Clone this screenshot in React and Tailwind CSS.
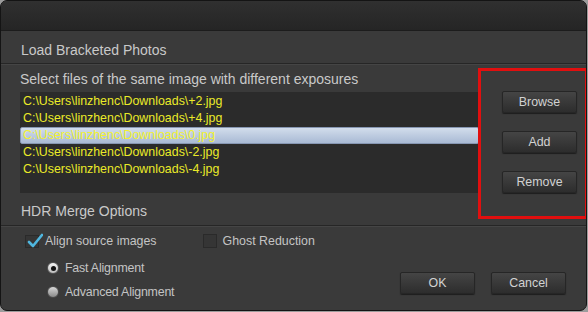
import React, { useState } from 'react';

const files = [
    'C:\\Users\\linzhenc\\Downloads\\+2.jpg',
    'C:\\Users\\linzhenc\\Downloads\\+4.jpg',
    'C:\\Users\\linzhenc\\Downloads\\0.jpg',
    'C:\\Users\\linzhenc\\Downloads\\-2.jpg',
    'C:\\Users\\linzhenc\\Downloads\\-4.jpg',
];

const DarkButton = ({ children }) => (
    <button className="flex h-[22px] w-[75px] items-center justify-center rounded-[2px] border border-[#262626] bg-gradient-to-b from-[#454545] to-[#2d2d2d] text-[12.4px] text-[#d2d2d2] shadow-[0_1px_1px_rgba(0,0,0,0.5)]">
        {children}
    </button>
);

const SectionHeader = ({ children, className }) => (
    <div className={`flex items-center border-b border-[#262626] px-[20px] text-[14px] text-[#c9c9c9] shadow-[0_1px_0_#454545] ${className}`}>
        {children}
    </div>
);

export default function App() {
    const [selected, setSelected] = useState(2);

    return (
        <div className="h-[312px] w-[588px] bg-[#9c9c9c] font-['Liberation_Sans',Arial,sans-serif]">
            <div className="relative flex h-[311px] w-[587px] flex-col overflow-hidden rounded-[7px] border border-[#141414] bg-[#3a3a3a]">
                {/* barra de título */}
                <div className="h-[30px] border-b border-[#1c1c1c] bg-gradient-to-b from-[#303030] to-[#252525]" />

                <SectionHeader className="h-[33px] pt-[7px]">Load Bracketed Photos</SectionHeader>

                <div className="flex h-[130px]">
                    <div className="flex w-[478px] flex-col pl-[19px]">
                        <div className="flex h-[28px] items-center pt-[3px] text-[14px] text-[#c9c9c9]">
                            Select files of the same image with different exposures
                        </div>
                        <div className="h-[101px] bg-[#2b2b2b] pt-[1px]">
                            {files.map((f, i) => (
                                <div
                                    key={f}
                                    onClick={() => setSelected(i)}
                                    className={
                                        i === selected
                                            ? 'flex h-[17px] items-center rounded-[2px] border border-[#8797b3] bg-gradient-to-b from-[#d2ddec] to-[#a9bad4] pl-[2px] text-[12.4px] text-[#f2f230]'
                                            : 'flex h-[17px] items-center pl-[3px] text-[12.4px] text-[#eaea28]'
                                    }
                                >
                                    {f}
                                </div>
                            ))}
                        </div>
                    </div>
                    <div className="flex flex-1 flex-col items-start gap-[18px] pt-[27px] pl-[23px]">
                        <DarkButton>Browse</DarkButton>
                        <DarkButton>Add</DarkButton>
                        <DarkButton>Remove</DarkButton>
                    </div>
                </div>

                <SectionHeader className="h-[32px] pt-[3px]">HDR Merge Options</SectionHeader>

                <div className="flex flex-1">
                    <div className="flex w-[380px] flex-col pl-[24px] pt-[8px] text-[12.4px] text-[#c4c4c4]">
                        <div className="flex h-[14px] items-center">
                            <div className="relative h-[13px] w-[14px] border border-[#2a2a2a] bg-[#353535]">
                                <svg className="absolute -top-[3px] left-[1px]" width="16" height="15" viewBox="0 0 16 15">
                                    <path d="M2 9 L6 13 L15 2" fill="none" stroke="#4fb6de" strokeWidth="2.6" strokeLinecap="round" strokeLinejoin="round" />
                                </svg>
                            </div>
                            <span className="ml-[6px]">Align source images</span>
                            <div className="ml-[46px] h-[14px] w-[14px] border border-[#2a2a2a] bg-[#353535]" />
                            <span className="ml-[6px]">Ghost Reduction</span>
                        </div>
                        <div className="mt-[11px] flex items-center pl-[22px]">
                            <div className="flex h-[12px] w-[12px] items-center justify-center rounded-full border border-[#555] bg-gradient-to-b from-[#f4f4f4] to-[#bdbdbd]">
                                <div className="h-[5px] w-[5px] rounded-full bg-[#111]" />
                            </div>
                            <span className="ml-[6px] tracking-[-0.2px]">Fast Alignment</span>
                        </div>
                        <div className="mt-[5px] flex items-center pl-[22px]">
                            <div className="h-[12px] w-[12px] rounded-full border border-[#4a4a4a] bg-gradient-to-b from-[#d8d8d8] to-[#8a8a8a]" />
                            <span className="ml-[6px] tracking-[-0.2px]">Advanced Alignment</span>
                        </div>
                    </div>
                    <div className="flex flex-1 items-start gap-[16px] pl-[19px] pt-[46px]">
                        <DarkButton>OK</DarkButton>
                        <DarkButton>Cancel</DarkButton>
                    </div>
                </div>

                {/* destaque vermelho da anotação */}
                <div className="pointer-events-none absolute left-[477px] top-[67px] h-[151px] w-[110px] border-[3px] border-[#e10f0f]" />
            </div>
        </div>
    );
}
